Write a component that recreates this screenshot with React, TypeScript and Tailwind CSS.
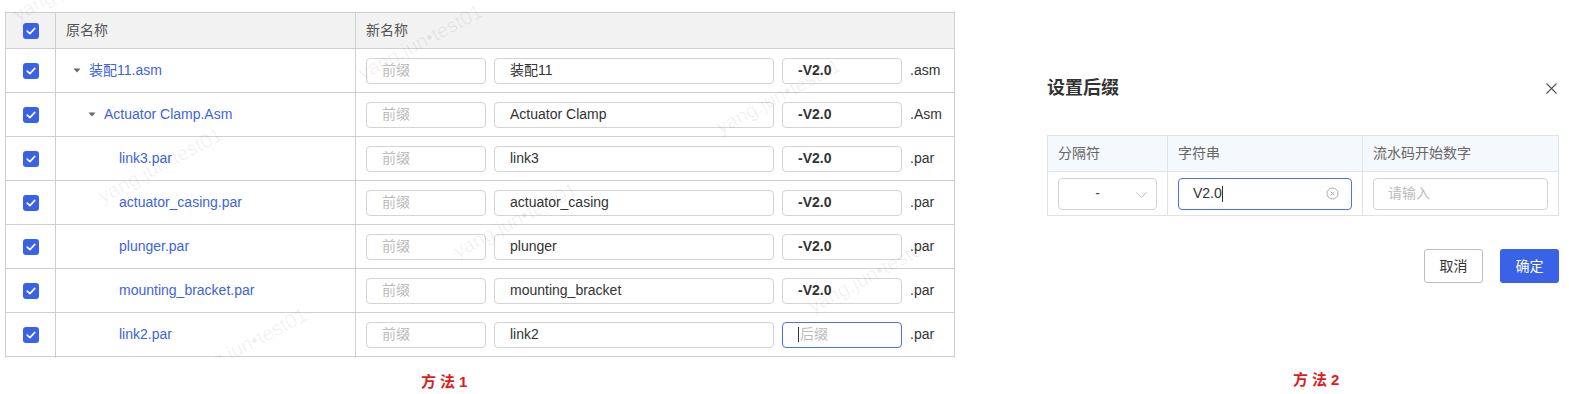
import React from "react";

type Row = { name: string; level: number; caret: boolean; base: string; ext: string; suffix: string };

const rows: Row[] = [
  { name: "装配11.asm", level: 0, caret: true, base: "装配11", ext: ".asm", suffix: "-V2.0" },
  { name: "Actuator Clamp.Asm", level: 1, caret: true, base: "Actuator Clamp", ext: ".Asm", suffix: "-V2.0" },
  { name: "link3.par", level: 2, caret: false, base: "link3", ext: ".par", suffix: "-V2.0" },
  { name: "actuator_casing.par", level: 2, caret: false, base: "actuator_casing", ext: ".par", suffix: "-V2.0" },
  { name: "plunger.par", level: 2, caret: false, base: "plunger", ext: ".par", suffix: "-V2.0" },
  { name: "mounting_bracket.par", level: 2, caret: false, base: "mounting_bracket", ext: ".par", suffix: "-V2.0" },
  { name: "link2.par", level: 2, caret: false, base: "link2", ext: ".par", suffix: "" },
  { name: "link1.par", level: 2, caret: false, base: "link1", ext: ".par", suffix: "-V2.0" },
];

const indent = ["pl-[17px]", "pl-[32px]", "pl-[47px]"];

// watermark centres
const marks = [
  "left-[75px] top-[-17px]",
  "left-[420px] top-[42px]",
  "left-[778px] top-[96px]",
  "left-[160px] top-[165px]",
  "left-[515px] top-[220px]",
  "left-[870px] top-[275px]",
  "left-[245px] top-[345px]",
];

const font = "font-['Liberation_Sans','Noto_Sans_CJK_SC',sans-serif]";

function Check() {
  return (
    <div className="flex h-4 w-4 items-center justify-center rounded-[3px] bg-[#3a62e8]">
      <svg width="10" height="8" viewBox="0 0 10 8" fill="none">
        <path d="M1.2 4.1 L3.9 6.6 L8.8 1.4" stroke="white" strokeWidth="1.6" strokeLinecap="round" strokeLinejoin="round" />
      </svg>
    </div>
  );
}

function Caret() {
  return (
    <svg width="8" height="5" viewBox="0 0 8 5" className="mr-2">
      <path d="M0.5 0.5 H7.5 L4 4.5 Z" fill="#666" />
    </svg>
  );
}

function Box({ width, children, focus }: { width: string; children: React.ReactNode; focus?: boolean }) {
  return (
    <div
      className={`flex h-[26px] items-center rounded-[4px] border px-[15px] text-[14px] ${width} ${
        focus ? "border-[#4a72ea]" : "border-[#d4d4d4]"
      }`}
    >
      {children}
    </div>
  );
}

function MainTable() {
  return (
    <div className="h-[346px] w-[950px] overflow-hidden border-l border-t border-[#cfcfcf]">
      <div className="grid h-[36px] grid-cols-[50px_300px_599px] border-b border-[#cfcfcf] bg-[#f2f2f2] text-[14px] text-[#555]">
        <div className="flex items-center justify-center border-r border-[#cfcfcf]">
          <Check />
        </div>
        <div className="flex items-center border-r border-[#cfcfcf] pl-[10px]">原名称</div>
        <div className="flex items-center border-r border-[#cfcfcf] pl-[10px]">新名称</div>
      </div>
      {rows.map((r, i) => (
        <div key={i} className="grid h-[44px] grid-cols-[50px_300px_599px] border-b border-[#cfcfcf] text-[14px]">
          <div className="flex items-center justify-center border-r border-[#cfcfcf]">
            <Check />
          </div>
          <div className={`flex items-center border-r border-[#cfcfcf] text-[#3c64e0] ${indent[r.level]}`}>
            <div className="flex w-4 items-center">{r.caret && <Caret />}</div>
            <span>{r.name}</span>
          </div>
          <div className="flex items-center gap-2 border-r border-[#cfcfcf] pl-[10px] text-[#333]">
            <Box width="w-[120px]">
              <span className="text-[#bcbcbc]">前缀</span>
            </Box>
            <Box width="w-[280px]">
              <span>{r.base}</span>
            </Box>
            {r.suffix ? (
              <Box width="w-[120px]">
                <span className="font-bold">{r.suffix}</span>
              </Box>
            ) : (
              <Box width="w-[120px]" focus>
                <span className="mr-px h-[15px] w-px bg-[#333]" />
                <span className="text-[#bcbcbc]">后缀</span>
              </Box>
            )}
            <span>{r.ext}</span>
          </div>
        </div>
      ))}
    </div>
  );
}

function Dialog() {
  return (
    <div className="w-[512px]">
      <div className="flex h-[24px] items-center justify-between">
        <span className="text-[18px] font-bold text-[#333]">设置后缀</span>
        <svg width="11" height="11" viewBox="0 0 11 11" className="mr-[2px]">
          <path d="M0.5 0.5 L10.5 10.5 M10.5 0.5 L0.5 10.5" stroke="#555" strokeWidth="1.1" />
        </svg>
      </div>
      <div className="mt-[35px] border border-[#dfe3e8] text-[14px]">
        <div className="grid h-[36px] grid-cols-[120px_195px_195px] border-b border-[#dfe3e8] bg-[#f5f8fc] text-[#666]">
          <div className="flex items-center border-r border-[#dfe3e8] pl-[10px]">分隔符</div>
          <div className="flex items-center border-r border-[#dfe3e8] pl-[10px]">字符串</div>
          <div className="flex items-center pl-[10px]">流水码开始数字</div>
        </div>
        <div className="grid h-[43px] grid-cols-[120px_195px_195px]">
          <div className="flex items-center border-r border-[#dfe3e8] pl-[10px]">
            <div className="relative flex h-[32px] w-[99px] items-center justify-center rounded-[4px] border border-[#d4d4d4] text-[#444]">
              <span className="mr-[20px]">-</span>
              <svg width="11" height="6" viewBox="0 0 11 6" className="absolute right-[9px] top-[13px]">
                <path d="M0.5 0.5 L5.5 5.5 L10.5 0.5" stroke="#bbb" fill="none" strokeWidth="1" />
              </svg>
            </div>
          </div>
          <div className="flex items-center border-r border-[#dfe3e8] pl-[10px]">
            <div className="flex h-[32px] w-[174px] items-center justify-between rounded-[4px] border border-[#4a72ea] pl-[14px] pr-[12px] text-[#333]">
              <span className="flex items-center">
                V2.0<span className="h-[16px] w-px bg-[#333]" />
              </span>
              <svg width="13" height="13" viewBox="0 0 13 13">
                <circle cx="6.5" cy="6.5" r="5.5" stroke="#aaa" fill="none" strokeWidth="1" />
                <path d="M4.6 4.6 L8.4 8.4 M8.4 4.6 L4.6 8.4" stroke="#aaa" strokeWidth="1" />
              </svg>
            </div>
          </div>
          <div className="flex items-center pl-[10px]">
            <div className="flex h-[32px] w-[175px] items-center rounded-[4px] border border-[#d4d4d4] pl-[14px] text-[#bcbcbc]">
              请输入
            </div>
          </div>
        </div>
      </div>
      <div className="mt-[33px] flex justify-end gap-[17px] text-[14px]">
        <button className="h-[34px] w-[59px] rounded-[3px] border border-[#bdbdbd] bg-white text-[#333]">取消</button>
        <button className="h-[34px] w-[59px] rounded-[3px] bg-[#3a62e8] text-white">确定</button>
      </div>
    </div>
  );
}

export default function App() {
  return (
    <div className={`flex h-[394px] w-[1569px] overflow-hidden bg-white ${font}`}>
      <div className="relative w-[960px] shrink-0">
        <div className="pl-[5px] pt-[12px]">
          <MainTable />
        </div>
        <div className="mt-[15px] pl-[421px] text-[15px] font-bold leading-[18px] tracking-[4px] text-[#e01b1b]">方法1</div>
        <div className="pointer-events-none absolute left-0 top-0 h-[358px] w-[960px] overflow-hidden">
          {marks.map((m, i) => (
            <div
              key={i}
              className={`absolute -translate-x-1/2 -translate-y-1/2 -rotate-[28deg] whitespace-nowrap text-[20px] text-[rgba(0,0,0,0.06)] ${m}`}
            >
              yang.jun•test01
            </div>
          ))}
        </div>
      </div>
      <div className="flex flex-col pl-[87px] pt-[76px]">
        <Dialog />
        <div className="mt-[88px] pl-[246px] text-[15px] font-bold leading-[18px] tracking-[4px] text-[#e01b1b]">方法2</div>
      </div>
    </div>
  );
}
